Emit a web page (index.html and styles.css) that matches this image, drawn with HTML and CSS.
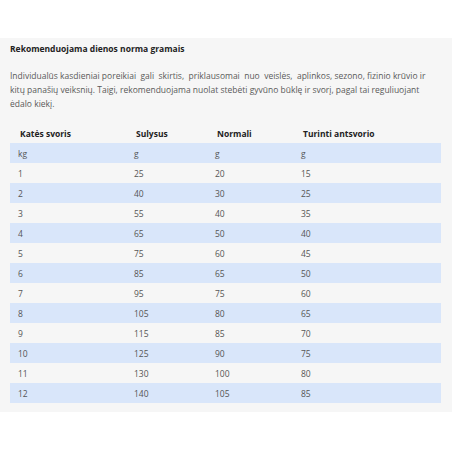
FILE: index.html
```html
<!DOCTYPE html>
<html>
<head>
<meta charset="utf-8">
<link rel="stylesheet" href="styles.css">
</head>
<body>
<div class="panel">
  <h3 class="title">Rekomenduojama dienos norma gramais</h3>
  <p class="intro">Individualūs kasdieniai poreikiai&nbsp; gali&nbsp; skirtis,&nbsp; priklausomai&nbsp; nuo&nbsp; veislės,&nbsp; aplinkos, sezono, fizinio krūvio ir kitų panašių veiksnių. Taigi, rekomenduojama nuolat stebėti gyvūno būklę ir svorį, pagal tai reguliuojant ėdalo kiekį.</p>
  <table class="norms">
    <colgroup>
      <col class="c1"><col class="c2"><col class="c3"><col class="c4">
    </colgroup>
    <thead>
      <tr><th>Katės svoris</th><th>Sulysus</th><th>Normali</th><th>Turinti antsvorio</th></tr>
    </thead>
    <tbody>
      <tr><td>kg</td><td>g</td><td>g</td><td>g</td></tr>
      <tr><td>1</td><td>25</td><td>20</td><td>15</td></tr>
      <tr><td>2</td><td>40</td><td>30</td><td>25</td></tr>
      <tr><td>3</td><td>55</td><td>40</td><td>35</td></tr>
      <tr><td>4</td><td>65</td><td>50</td><td>40</td></tr>
      <tr><td>5</td><td>75</td><td>60</td><td>45</td></tr>
      <tr><td>6</td><td>85</td><td>65</td><td>50</td></tr>
      <tr><td>7</td><td>95</td><td>75</td><td>60</td></tr>
      <tr><td>8</td><td>105</td><td>80</td><td>65</td></tr>
      <tr><td>9</td><td>115</td><td>85</td><td>70</td></tr>
      <tr><td>10</td><td>125</td><td>90</td><td>75</td></tr>
      <tr><td>11</td><td>130</td><td>100</td><td>80</td></tr>
      <tr><td>12</td><td>140</td><td>105</td><td>85</td></tr>
    </tbody>
  </table>
</div>
</body>
</html>
```
FILE: styles.css
```css
html, body {
  margin: 0;
  padding: 0;
  background: #ffffff;
}
body {
  font-family: "Open Sans", "DejaVu Sans", sans-serif;
  color: #555555;
}
.panel {
  margin-top: 38px;
  height: 374px;
  box-sizing: border-box;
  background: #f6f6f6;
  padding: 4px 11px 0 10px;
}
.title {
  margin: 0;
  font-size: 8.5px;
  line-height: 14px;
  font-weight: 700;
  color: #222222;
}
.intro {
  margin: 13px 0 0 0;
  font-size: 8.5px;
  line-height: 14px;
  color: #5a5a5a;
}
.norms {
  margin-top: 12px;
  width: 431px;
  border-collapse: collapse;
  font-size: 8.5px;
}
.c1 { width: 116px; }
.c2 { width: 81px; }
.c3 { width: 86px; }
.c4 { width: 148px; }
.norms th {
  text-align: left;
  font-weight: 700;
  color: #222222;
  height: 20px;
  padding: 0 0 0 10px;
}
.norms td {
  height: 20px;
  padding: 0 0 0 8px;
  color: #555555;
}
.norms tbody tr:nth-child(odd) {
  background: #d9e6fa;
}
```
